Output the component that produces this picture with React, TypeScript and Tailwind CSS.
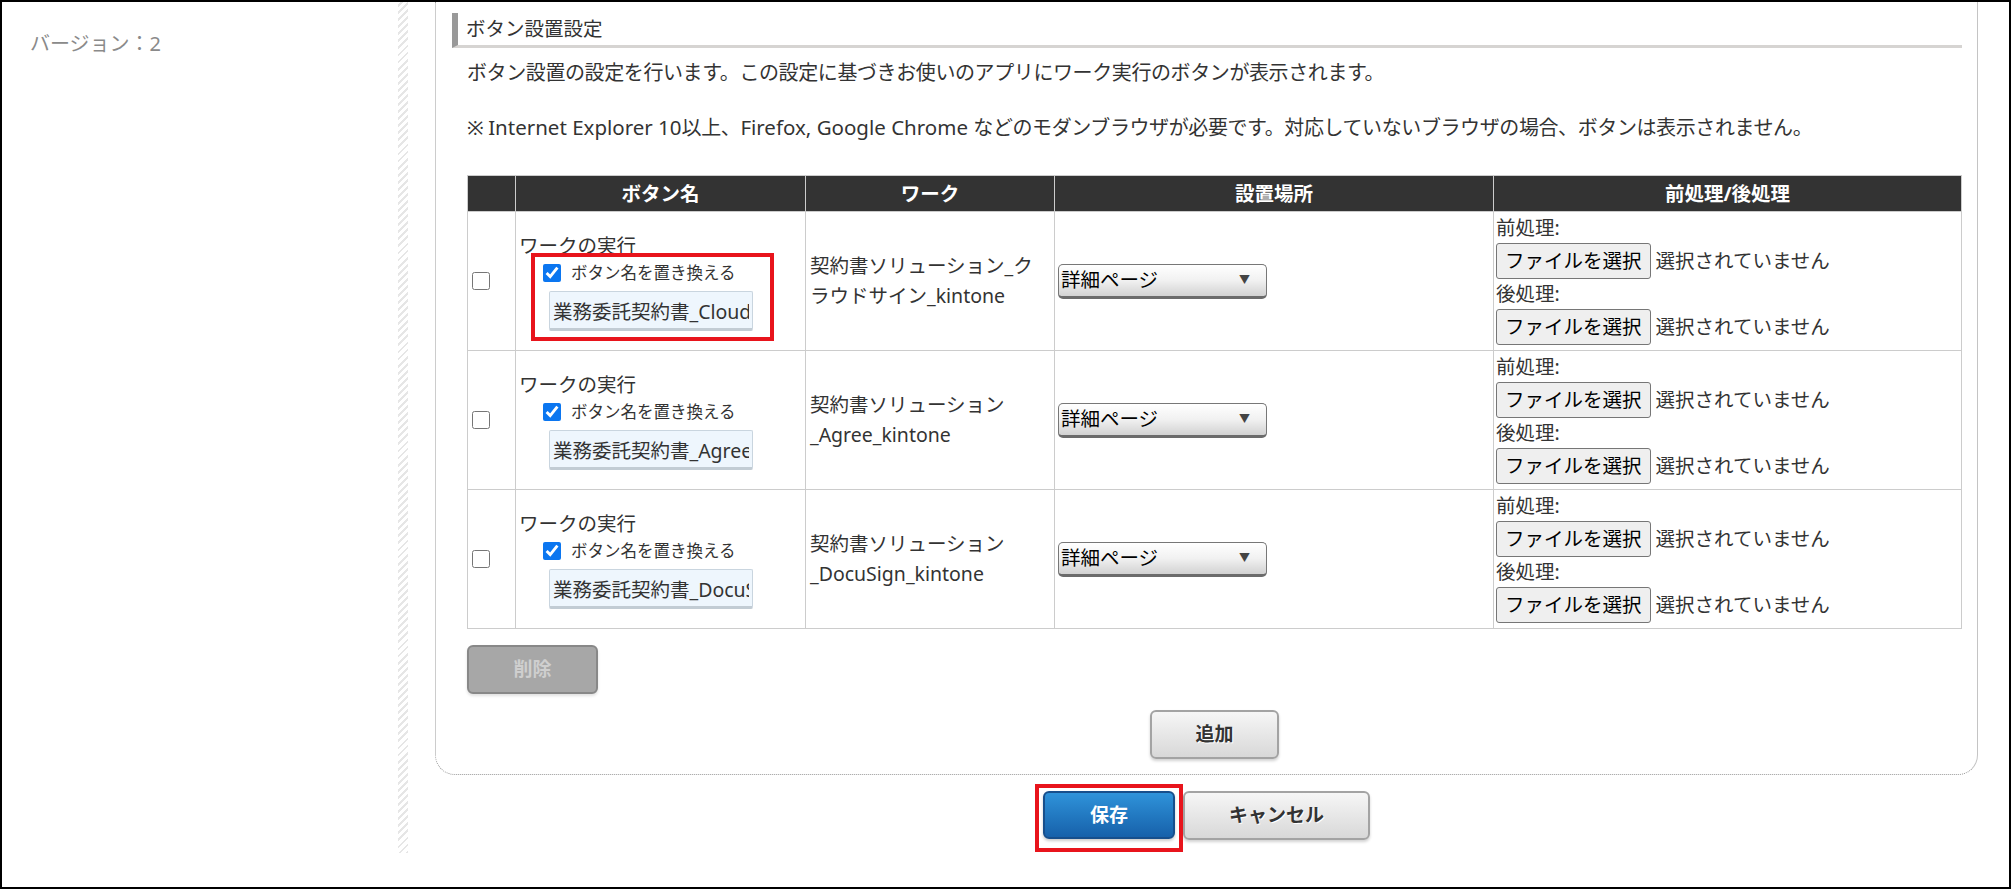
import React from "react";

type ButtonRow = {
  work: string[];
  label: string;
  flagged?: boolean;
};

const rows: ButtonRow[] = [
  { work: ["契約書ソリューション_ク", "ラウドサイン_kintone"], label: "業務委託契約書_CloudSign", flagged: true },
  { work: ["契約書ソリューション", "_Agree_kintone"], label: "業務委託契約書_Agree" },
  { work: ["契約書ソリューション", "_DocuSign_kintone"], label: "業務委託契約書_DocuSign" },
];

function PlacementSelect() {
  return (
    <div className="flex h-[35px] w-[209px] items-center justify-between rounded-[5px] border border-[#777] border-b-[3px] border-b-[#6b6b6b] bg-gradient-to-b from-white via-[#f1f1f1] to-[#d2d2d2] pl-[2px] pr-[16px] text-[19.5px] text-black">
      <span>詳細ページ</span>
      <span className="text-[11px] text-[#444]">▼</span>
    </div>
  );
}

function FilePicker() {
  return (
    <div className="flex items-center gap-[5px]">
      <button className="h-[36px] rounded-[3px] border border-[#767676] bg-[#efefef] px-[8px] text-[19.5px] text-black">
        ファイルを選択
      </button>
      <span className="text-[19.5px] text-[#333]">選択されていません</span>
    </div>
  );
}

function GrayButton({ children, className = "" }: { children: React.ReactNode; className?: string }) {
  return (
    <button
      className={`h-[49px] rounded-[6px] border-2 border-[#a3a3a3] bg-gradient-to-b from-[#f6f6f6] to-[#d8d8d8] text-[19px] font-bold text-[#333] shadow-[0_2px_3px_rgba(0,0,0,0.18)] [text-shadow:1px_1px_0_#fff] ${className}`}
    >
      {children}
    </button>
  );
}

export default function App() {
  return (
    <div className="flex h-[889px] w-full overflow-hidden border-2 border-black bg-white text-[#333] [font-family:'Noto_Sans','Noto_Sans_CJK_JP',sans-serif]">
      {/* sidebar */}
      <aside className="w-[396px] shrink-0 pl-[28px] pt-[27px]">
        <p className="text-[20px] leading-[30px] text-[#8a8a8a]">バージョン：2</p>
      </aside>
      <div className="h-[851px] w-[10px] shrink-0 bg-[repeating-linear-gradient(-45deg,#e6e6e6_0px,#e6e6e6_2px,transparent_2px,transparent_5px)]" />

      <main className="ml-[27px] w-[1543px] shrink-0">
        <section className="rounded-b-[20px] border-x border-b border-dotted border-[#999] [border-right-style:solid] border-r-[#c4c4c4] pb-[15px] pl-[16px] pr-[15px] pt-[11px]">
          <h2 className="flex h-[35px] items-center border-b-[3px] border-l-[6px] border-b-[#d6d4d2] border-l-[#999] pl-[8px] text-[19.5px] text-[#333]">
            ボタン設置設定
          </h2>

          <div className="pl-[15px]">
            <p className="mt-[10px] text-[20px] leading-[30px] tracking-[-0.4px]">
              ボタン設置の設定を行います。この設定に基づきお使いのアプリにワーク実行のボタンが表示されます。
            </p>
            <p className="mt-[24px] text-[20px] leading-[30px] tracking-[-0.4px]">
              ※ <span className="text-[20.5px] tracking-normal">Internet Explorer 10</span>以上、
              <span className="text-[20.5px] tracking-normal">Firefox, Google Chrome </span>
              などのモダンブラウザが必要です。対応していないブラウザの場合、ボタンは表示されません。
            </p>

            <table className="mt-[32px] w-[1494px] table-fixed border-collapse text-[19.5px] leading-[30px]">
              <colgroup>
                <col className="w-[48px]" />
                <col className="w-[290px]" />
                <col className="w-[249px]" />
                <col className="w-[439px]" />
                <col className="w-[468px]" />
              </colgroup>
              <thead>
                <tr className="h-[36px] bg-[#333] text-white">
                  <th className="border border-[#ccc]" />
                  <th className="border border-[#ccc] font-bold">ボタン名</th>
                  <th className="border border-[#ccc] font-bold">ワーク</th>
                  <th className="border border-[#ccc] font-bold">設置場所</th>
                  <th className="border border-[#ccc] font-bold">前処理/後処理</th>
                </tr>
              </thead>
              <tbody>
                {rows.map((row) => (
                  <tr key={row.label} className="h-[139px]">
                    <td className="border border-[#ccc] pl-[4px] align-middle">
                      <input type="checkbox" className="m-0 block h-[18px] w-[18px]" />
                    </td>
                    <td className="border border-[#ccc] px-[3px] align-middle">
                      <div>ワークの実行</div>
                      <div className="relative">
                        <label className="flex h-[24px] items-center gap-[10px] pl-[24px] text-[16.5px]">
                          <input type="checkbox" defaultChecked className="m-0 h-[18px] w-[18px] accent-[#0b76f0]" />
                          ボタン名を置き換える
                        </label>
                        <input
                          readOnly
                          defaultValue={row.label}
                          className="ml-[30px] mt-[6px] block h-[40px] w-[204px] rounded-[2px] border border-[#c9d5df] border-b-[3px] border-b-[#c2ccd4] bg-[#eef6fd] px-[3px] text-[19.5px] text-[#333] outline-none"
                        />
                        {row.flagged && (
                          <div className="pointer-events-none absolute -bottom-[10px] -top-[8px] left-[12px] right-[28px] border-4 border-[#e8141c]" />
                        )}
                      </div>
                    </td>
                    <td className="border border-[#ccc] px-[4px] align-middle">
                      {row.work.map((line) => (
                        <div key={line}>{line}</div>
                      ))}
                    </td>
                    <td className="border border-[#ccc] px-[3px] align-middle">
                      <PlacementSelect />
                    </td>
                    <td className="border border-[#ccc] px-[2px] pb-[2px] pt-[1px] align-top">
                      <div>前処理:</div>
                      <FilePicker />
                      <div>後処理:</div>
                      <FilePicker />
                    </td>
                  </tr>
                ))}
              </tbody>
            </table>

            <button
              disabled
              className="mt-[16px] block h-[49px] w-[131px] rounded-[6px] border-2 border-[#888] bg-[#a7a7a7] text-[19px] font-bold text-[#cfcfcf] shadow-[0_2px_3px_rgba(0,0,0,0.12)]"
            >
              削除
            </button>

            <div className="mt-[16px] flex justify-center">
              <GrayButton className="w-[129px]">追加</GrayButton>
            </div>
          </div>
        </section>

        {/* save / cancel */}
        <div className="mt-[16px] flex justify-center gap-[8px]">
          <div className="relative">
            <button className="h-[48px] w-[132px] rounded-[6px] border-2 border-[#174f8c] bg-gradient-to-b from-[#2f93da] to-[#1761aa] text-[19px] font-bold text-white shadow-[0_2px_3px_rgba(0,0,0,0.2)]">
              保存
            </button>
            <div className="pointer-events-none absolute -bottom-[12px] -left-[8px] -right-[8px] -top-[7px] border-4 border-[#e8141c]" />
          </div>
          <GrayButton className="h-[48px] w-[187px]">キャンセル</GrayButton>
        </div>
      </main>
    </div>
  );
}
